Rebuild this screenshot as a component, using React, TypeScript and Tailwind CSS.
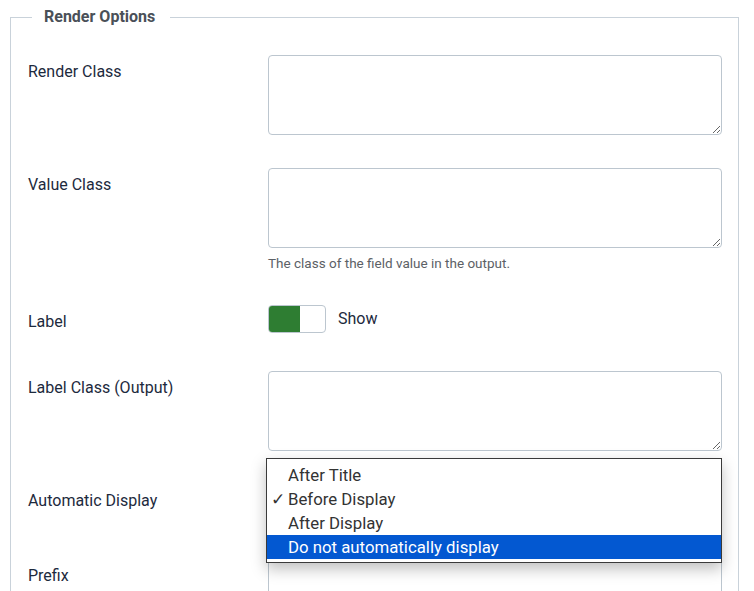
import React from "react";

const FONT = { fontFamily: "Roboto, 'Noto Sans', sans-serif" };

function Row({
  label,
  children,
  className = "",
}: {
  label: string;
  children: React.ReactNode;
  className?: string;
}) {
  return (
    <div className={`flex ${className}`}>
      <div className="w-[240px] shrink-0 pt-[6px] text-[16px] leading-[22px] text-[#1d2a3d]">
        {label}
      </div>
      <div className="relative flex-1">{children}</div>
    </div>
  );
}

function Area() {
  return (
    <textarea className="block h-[80px] w-full rounded-[4px] border border-[#bcc6cf] bg-white" />
  );
}

const OPTIONS = ["After Title", "Before Display", "After Display", "Do not automatically display"];

export default function App() {
  return (
    <div className="h-[591px] overflow-hidden bg-white" style={FONT}>
      <fieldset className="ml-[10px] mt-[6px] w-[729px] border border-[#c9d2da] pl-[17px] pr-[16px]">
        <legend className="ml-[4px] pl-[12px] pr-[15px] text-[16px] font-bold leading-[22px] text-[#4a5058]">
          Render Options
        </legend>
        <div className="pt-[27px]">
          <Row label="Render Class">
            <Area />
          </Row>
          <Row label="Value Class" className="mt-[33px]">
            <Area />
            <div className="mt-[6px] text-[13.5px] leading-[18px] text-[#5c6166]">
              The class of the field value in the output.
            </div>
          </Row>
          <Row label="Label" className="mt-[33px]">
            <div className="flex items-center">
              <div className="flex h-[28px] w-[58px] overflow-hidden rounded-[4px] border border-[#bcc6cf]">
                <div className="h-full w-[31px] bg-[#2e7d32]" />
              </div>
              <span className="ml-[12px] text-[16px] text-[#1d2a3d]">Show</span>
            </div>
          </Row>
          <Row label="Label Class (Output)" className="mt-[38px]">
            <Area />
          </Row>
          <Row label="Automatic Display" className="mt-[33px]">
            <div className="h-[42px] w-full rounded-[4px] border border-[#bcc6cf] bg-white" />
            <div className="absolute left-[-2px] top-[-26px] z-10 w-[456px] border border-[#3a3a3a] bg-white pb-[3px] pt-[4px] shadow-[0_6px_14px_rgba(0,0,0,0.25)]">
              {OPTIONS.map((o, i) => (
                <div
                  key={o}
                  className={`flex h-[24px] items-center pt-[1px] text-[16.8px] ${
                    i === 3 ? "bg-[#0358d1] text-white" : "text-[#333333]"
                  }`}
                >
                  <span className="w-[21px] pl-[4px] text-[17px]">{i === 1 ? "✓" : ""}</span>
                  {o}
                </div>
              ))}
            </div>
          </Row>
          <Row label="Prefix" className="mt-[33px]">
            <Area />
          </Row>
        </div>
      </fieldset>
    </div>
  );
}
